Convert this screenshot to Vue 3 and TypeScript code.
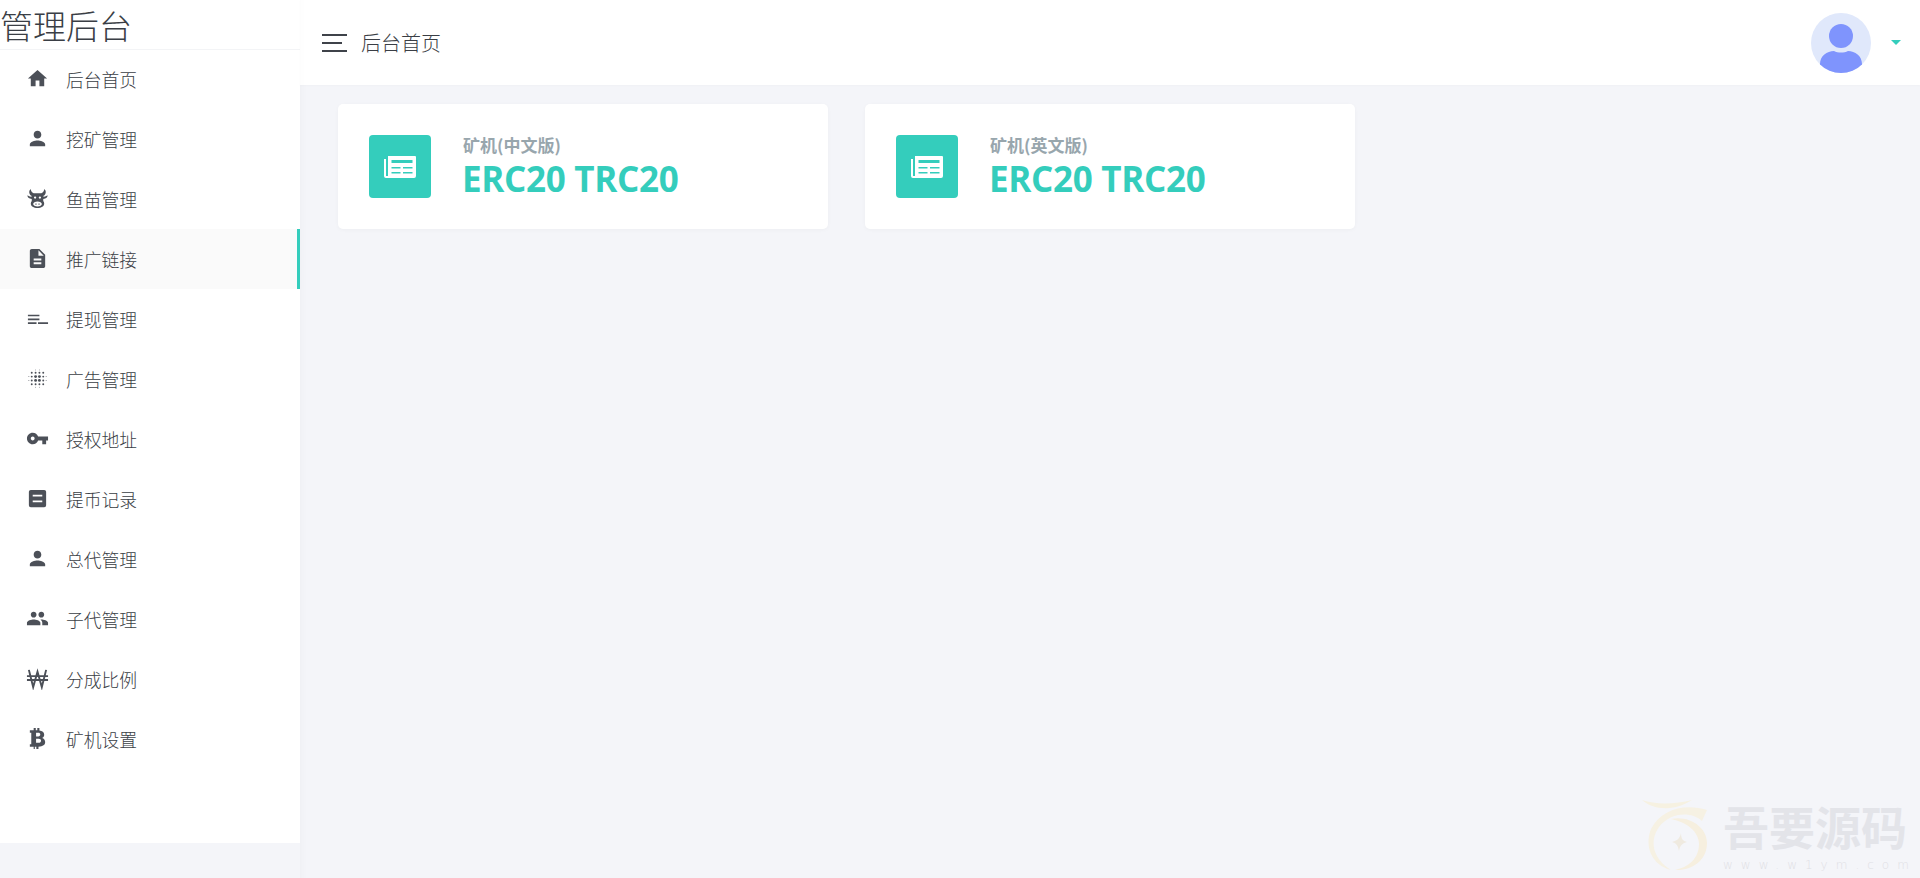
<template>
  <div class="page">
    <aside class="sidebar">
      <div class="brand">管理后台</div>
      <nav class="menu">
        <a v-for="item in menu" :key="item.label" class="menu-item" :class="{ active: item.active }">
          <span class="menu-icon">
            <svg viewBox="0 0 24 24" width="23" height="23" fill="#4c5058" v-html="item.icon"></svg>
          </span>
          <span class="menu-label">{{ item.label }}</span>
        </a>
      </nav>
    </aside>

    <div class="main">
      <header class="topbar">
        <div class="burger"><i></i><i class="short"></i><i></i></div>
        <span class="page-title">后台首页</span>
        <div class="user">
          <svg class="avatar" viewBox="0 0 60 60" width="60" height="60">
            <defs><clipPath id="av"><circle cx="30" cy="30" r="30" /></clipPath></defs>
            <circle cx="30" cy="30" r="30" fill="#e0e8fb" />
            <g clip-path="url(#av)">
              <circle cx="30" cy="23" r="12" fill="#7f94fd" />
              <path d="M9 60v-9c0-8 7-13 14-13 4 2 10 2 14 0 7 0 14 5 14 13v9z" fill="#7f94fd" />
            </g>
          </svg>
          <span class="caret"></span>
        </div>
      </header>

      <section class="cards">
        <div v-for="card in cards" :key="card.title" class="card">
          <div class="card-icon">
            <svg viewBox="0 0 32 22" width="32" height="22">
              <path fill="#fff" d="M4 0h27a1 1 0 0 1 1 1v19a2 2 0 0 1-2 2H2a2 2 0 0 1-2-2V3h2v17h2z" />
              <rect x="7.500" y="4" width="21" height="3" fill="#34cdbc" />
              <rect x="7.500" y="11" width="9" height="1.500" fill="#34cdbc" />
              <rect x="19" y="11" width="9.500" height="1.500" fill="#34cdbc" />
              <rect x="7.500" y="16" width="9" height="1.500" fill="#34cdbc" />
              <rect x="19" y="16" width="9.500" height="1.500" fill="#34cdbc" />
            </svg>
          </div>
          <div class="card-text">
            <div class="card-title">{{ card.title }}</div>
            <div class="card-value">{{ card.value }}</div>
          </div>
        </div>
      </section>
    </div>

    <div class="watermark">
      <svg class="wm-logo" viewBox="0 0 70 76" width="70" height="76">
        <path d="M1 3c14 5 34 4 50 0-6 4-14 7-22 8C17 12 8 9 1 3z" fill="#f6f1e1" />
        <path d="M66 13C44 6 20 12 10 32 3 50 11 68 30 73 12 62 8 44 18 30 28 17 48 13 61 24z" fill="#f6f1e3" />
        <path d="M30 22c18-4 36 8 36 24 0 18-16 28-32 27 14-3 24-12 24-26 0-12-12-22-28-25z" fill="#f6efdf" />
        <path d="M40 36c0 6 2 8 6 9-4 1-7 3-8 9-1-6-3-8-7-9 4-1 8-3 9-9z" fill="#efeae0" />
      </svg>
      <div class="wm-text">
        <div class="wm-name">吾要源码</div>
        <div class="wm-url">www.w1ym.com</div>
      </div>
    </div>
  </div>
</template>

<script setup lang="ts">
const person = '<path d="M12 12c2.210 0 4-1.790 4-4s-1.790-4-4-4-4 1.790-4 4 1.790 4 4 4zm0 2c-2.670 0-8 1.340-8 4v2h16v-2c0-2.660-5.330-4-8-4z"/>'

// blur_on style halftone
const dots: string[] = []
for (const x of [6, 10, 14, 18]) {
  for (const y of [6, 10, 14, 18]) {
    const inner = (x === 10 || x === 14) && (y === 10 || y === 14)
    dots.push(`<circle cx="${x}" cy="${y}" r="${inner ? 1.5 : 1}"/>`)
  }
}
for (const v of [10, 14]) {
  for (const edge of [3, 21]) {
    dots.push(`<circle cx="${edge}" cy="${v}" r="0.5"/><circle cx="${v}" cy="${edge}" r="0.5"/>`)
  }
}

const menu = [
  { label: '后台首页', icon: '<path d="M10 20v-6h4v6h5v-8h3L12 3 2 12h3v8z"/>' },
  { label: '挖矿管理', icon: person },
  {
    label: '鱼苗管理',
    icon: '<path fill-rule="evenodd" d="M5 2C5 4 6 5.500 8 6.500H16C18 5.500 19 4 19 2L20.500 4C21 6.500 20 8.500 18 9.500V10C19 10.300 21 10 22.500 8.700C22.800 10.700 21 12.200 18 12.500V14.500C18.700 15.300 19 16.200 19 17.500C19 20 16 22 12 22C8 22 5 20 5 17.500C5 16.200 5.300 15.300 6 14.500V12.500C3 12.200 1.200 10.700 1.500 8.700C3 10 5 10.300 6 10V9.500C4 8.500 3 6.500 3.500 4ZM9.500 9.800a1.200 1.200 0 1 0 0 2.400 1.200 1.200 0 0 0 0-2.400zM14.500 9.800a1.200 1.200 0 1 0 0 2.400 1.200 1.200 0 0 0 0-2.400zM12 15.200c-2.500 0-4.500 1.100-4.500 2.600s2 2.600 4.500 2.600 4.500-1.100 4.500-2.600-2-2.600-4.500-2.600zM9.800 17.200h1.200v1.200H9.800zM13 17.200h1.200v1.200H13z"/>',
  },
  {
    label: '推广链接',
    active: true,
    icon: '<path d="M14 2H6c-1.100 0-1.990.9-1.990 2L4 20c0 1.100.89 2 1.990 2H18c1.100 0 2-.9 2-2V8l-6-6zm2 16H8v-2h8v2zm0-4H8v-2h8v2zm-3-5V3.500L18.500 9H13z"/>',
  },
  { label: '提现管理', icon: '<path d="M2 8h12v1.700H2zM2 12h12v1.700H2zM2 16h9v1.700H2zM12.500 16H23v1.700H12.500z"/>' },
  { label: '广告管理', icon: dots.join('') },
  {
    label: '授权地址',
    icon: '<path d="M12.650 10C11.830 7.670 9.610 6 7 6c-3.310 0-6 2.690-6 6s2.690 6 6 6c2.610 0 4.830-1.670 5.650-4H17v4h4v-4h2v-4H12.650zM7 14c-1.100 0-2-.9-2-2s.9-2 2-2 2 .9 2 2-.9 2-2 2z"/>',
  },
  {
    label: '提币记录',
    icon: '<path fill-rule="evenodd" d="M5 3h14a2 2 0 0 1 2 2v14a2 2 0 0 1-2 2H5a2 2 0 0 1-2-2V5a2 2 0 0 1 2-2zm2 5v2h10V8zm0 6v2h10v-2z"/>',
  },
  { label: '总代管理', icon: person },
  {
    label: '子代管理',
    icon: '<path d="M16 11c1.660 0 2.990-1.340 2.990-3S17.660 5 16 5c-1.660 0-3 1.340-3 3s1.340 3 3 3zm-8 0c1.660 0 2.990-1.340 2.990-3S9.660 5 8 5C6.340 5 5 6.340 5 8s1.340 3 3 3zm0 2c-2.330 0-7 1.170-7 3.500V19h14v-2.500c0-2.330-4.670-3.500-7-3.500zm8 0c-.29 0-.62.02-.97.05 1.160.84 1.970 1.970 1.970 3.450V19h6v-2.500c0-2.330-4.670-3.500-7-3.500z"/>',
  },
  {
    label: '分成比例',
    icon: '<path fill="none" stroke="#4c5058" stroke-width="2" d="M3 3l4.500 18L12 5l4.500 16L21 3M1 9.500h22M1 13.500h22"/>',
  },
  {
    label: '矿机设置',
    icon: '<path fill-rule="evenodd" d="M8 1h2.200v2.500h1.600V1H14v2.600c3 .3 5 1.800 5 4.400 0 1.600-.8 2.900-2.200 3.500 2 .6 3.200 2.200 3.200 4.200 0 3-2.200 4.600-7 4.800V23h-2.200v-2.500h-1.600V23H8v-2.500H4V18h1.500V6H4V3.500h4zm2.500 5v3.800h2.300c1.300 0 2.100-.7 2.100-1.900s-.8-1.900-2.100-1.900zm0 6.200v4.300h2.800c1.500 0 2.400-.8 2.400-2.100 0-1.400-.9-2.200-2.400-2.200z"/>',
  },
]

const cards = [
  { title: '矿机(中文版)', value: 'ERC20 TRC20' },
  { title: '矿机(英文版)', value: 'ERC20 TRC20' },
]
</script>

<style>
html,
body {
  margin: 0;
  background: #f4f5f9;
}
</style>

<style scoped>
.page {
  position: relative;
  display: flex;
  align-items: flex-start;
  width: 1920px;
  height: 878px;
  overflow: hidden;
  background: #f4f5f9;
  font-family: "Noto Sans CJK SC", "Noto Sans", sans-serif;
  font-weight: 300;
  color: #3a3e45;
}

.sidebar {
  flex: 0 0 300px;
  height: 843px;
  background: #fff;
}

.brand {
  height: 49px;
  margin-bottom: -1px;
  border-bottom: 1px solid #f3f4f6;
  font-size: 33px;
  line-height: 50px;
}

.menu-item {
  display: flex;
  align-items: center;
  box-sizing: border-box;
  height: 60px;
  padding-left: 26px;
}

.menu-item.active {
  background: #fafafa;
  border-right: 3px solid #34cdbc;
}

.menu-icon {
  display: flex;
  flex: 0 0 23px;
  margin-top: -2px;
}

.menu-label {
  margin-left: 17px;
  font-size: 17.800px;
  line-height: 24px;
}

.main {
  flex: 1;
  min-width: 0;
  height: 878px;
  box-shadow: inset 8px 0 8px -8px rgba(0, 0, 0, 0.04);
}

.topbar {
  display: flex;
  align-items: center;
  height: 85px;
  padding: 0 19px 0 22px;
  background: #fff;
  box-shadow: inset 8px 0 8px -8px rgba(0, 0, 0, 0.02), 0 1px 2px rgba(0, 0, 0, 0.02);
}

.burger {
  display: flex;
  flex-direction: column;
  gap: 6px;
  width: 25px;
}

.burger i {
  display: block;
  height: 2px;
  background: #3f434a;
}

.burger .short {
  width: 20px;
}

.page-title {
  margin-left: 14px;
  font-size: 20px;
}

.user {
  display: flex;
  align-items: center;
  margin-left: auto;
}

.caret {
  width: 0;
  height: 0;
  margin-left: 20px;
  border-top: 5px solid #34cdbc;
  border-left: 5px solid transparent;
  border-right: 5px solid transparent;
}

.cards {
  display: flex;
  gap: 37px;
  padding: 19px 0 0 38px;
}

.card {
  display: flex;
  align-items: center;
  box-sizing: border-box;
  width: 490px;
  height: 125px;
  padding-left: 31px;
  border-radius: 5px;
  background: #fff;
  box-shadow: 0 1px 4px rgba(0, 0, 0, 0.03);
}

.card-icon {
  display: flex;
  align-items: center;
  justify-content: center;
  width: 62px;
  height: 63px;
  border-radius: 4px;
  background: #34cdbc;
}

.card-text {
  margin-top: -1px;
  margin-left: 32px;
}

.card-title {
  color: #98a6ad;
  font-size: 17px;
  font-weight: 700;
  line-height: 24px;
}

.card-value {
  margin-top: 1px;
  margin-left: -1px;
  color: #34cdbc;
  font-family: "Open Sans", sans-serif;
  font-size: 35px;
  font-weight: 700;
  letter-spacing: -0.300px;
  line-height: 42px;
}

.watermark {
  position: absolute;
  right: 3px;
  bottom: 3px;
  display: flex;
  align-items: flex-start;
  gap: 12px;
}

.wm-logo {
  margin-top: -3px;
}

.wm-text {
  width: 194px;
}

.wm-name {
  color: #e3e4e9;
  font-size: 46px;
  font-weight: 700;
  line-height: 50px;
}

.wm-url {
  margin-top: 5px;
  color: #dfe0e5;
  font-family: "DejaVu Sans", sans-serif;
  font-size: 12px;
  letter-spacing: 8px;
  line-height: 20px;
  white-space: nowrap;
}
</style>
